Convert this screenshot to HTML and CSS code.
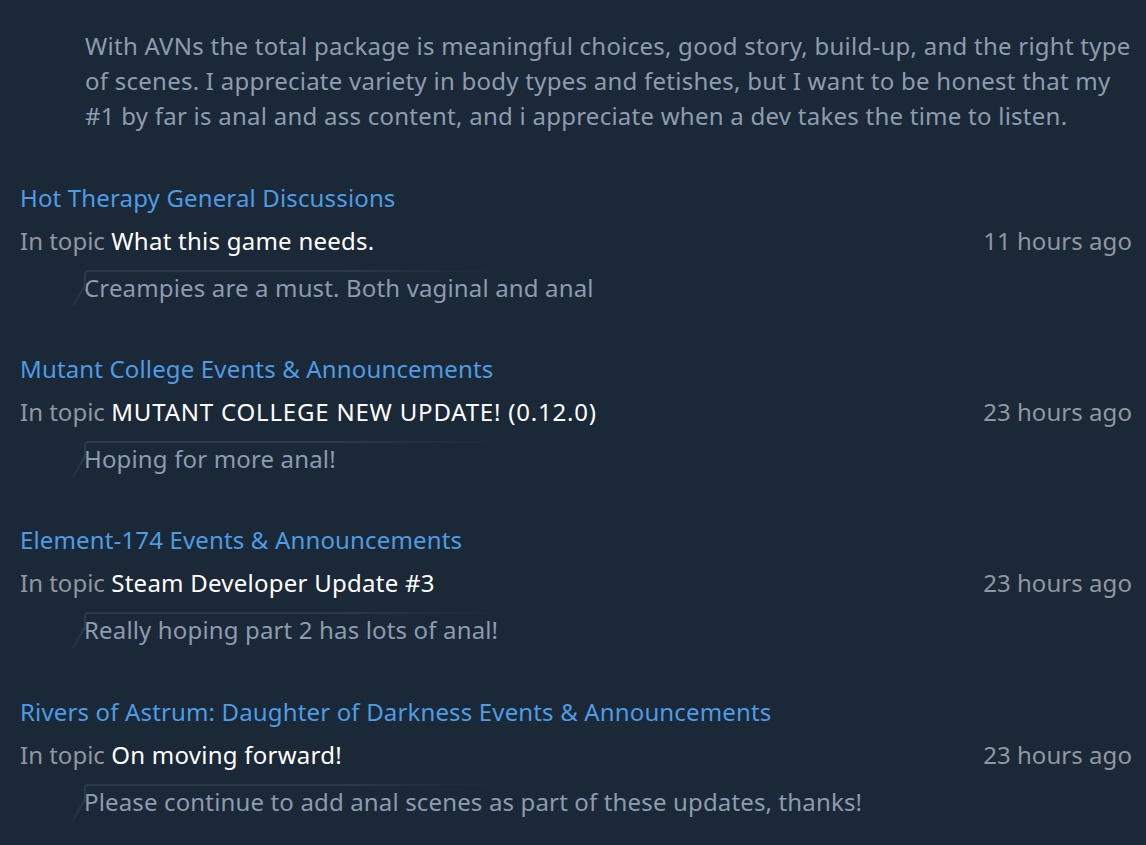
FILE: index.html
```html
<!DOCTYPE html>
<html lang="en">
<head>
<meta charset="utf-8">
<title>Comment history</title>
<link rel="stylesheet" href="styles.css">
</head>
<body>
<div class="page">
  <div class="intro">With AVNs the total package is meaningful choices, good story, build-up, and the right type of scenes. I appreciate variety in body types and fetishes, but I want to be honest that my #1 by far is anal and ass content, and i appreciate when a dev takes the time to listen.</div>

  <div class="item">
    <a class="forum" href="#">Hot Therapy General Discussions</a>
    <div class="topic-row">
      <div class="topic"><span class="label">In topic</span> <span class="title">What this game needs.</span></div>
      <div class="time">11 hours ago</div>
    </div>
    <div class="quote">Creampies are a must. Both vaginal and anal</div>
  </div>

  <div class="item">
    <a class="forum" href="#">Mutant College Events &amp; Announcements</a>
    <div class="topic-row">
      <div class="topic"><span class="label">In topic</span> <span class="title caps">MUTANT COLLEGE NEW UPDATE! (0.12.0)</span></div>
      <div class="time">23 hours ago</div>
    </div>
    <div class="quote">Hoping for more anal!</div>
  </div>

  <div class="item">
    <a class="forum" href="#">Element-174 Events &amp; Announcements</a>
    <div class="topic-row">
      <div class="topic"><span class="label">In topic</span> <span class="title">Steam Developer Update #3</span></div>
      <div class="time">23 hours ago</div>
    </div>
    <div class="quote">Really hoping part 2 has lots of anal!</div>
  </div>

  <div class="item">
    <a class="forum" href="#">Rivers of Astrum: Daughter of Darkness Events &amp; Announcements</a>
    <div class="topic-row">
      <div class="topic"><span class="label">In topic</span> <span class="title">On moving forward!</span></div>
      <div class="time">23 hours ago</div>
    </div>
    <div class="quote">Please continue to add anal scenes as part of these updates, thanks!</div>
  </div>
</div>
</body>
</html>
```

FILE: styles.css
```css
html, body {
  margin: 0;
  padding: 0;
  background: #1b2838;
}

body {
  font-family: "Noto Sans", "Open Sans", "Liberation Sans", sans-serif;
  font-size: 24px;
  letter-spacing: 0.15px;
  overflow: hidden;
}

.page {
  padding: 28px 14px 0 20px;
}

.intro {
  padding-left: 65px;
  margin-right: -6px;
  color: #8d9dae;
  line-height: 35px;
  letter-spacing: 0.25px;
  margin-bottom: 47px;
}

.item {
  display: flex;
  flex-direction: column;
  margin-bottom: 46.2px;
}

.forum {
  color: #4e9ce3;
  text-decoration: none;
  line-height: 36px;
  align-self: flex-start;
}

.topic-row {
  display: flex;
  justify-content: space-between;
  align-items: baseline;
  margin-top: 7px;
  line-height: 36px;
}

.label {
  color: #8f98a0;
  letter-spacing: 0;
}

.title {
  color: #ffffff;
  letter-spacing: 0.25px;
}

.title.caps {
  letter-spacing: 0.8px;
}

.time {
  color: #8f98a0;
  letter-spacing: 0.05px;
}

.quote {
  position: relative;
  margin-top: 11px;
  margin-left: 64px;
  line-height: 35px;
  color: #8c9cae;
}

.quote::before {
  content: "";
  position: absolute;
  left: 0;
  top: 0;
  width: 420px;
  height: 16px;
  border-top: 2px solid #2d3947;
  border-left: 2px solid #2d3947;
  border-top-left-radius: 4px;
  -webkit-mask-image: linear-gradient(to right, #000 60%, transparent 100%);
  mask-image: linear-gradient(to right, #000 60%, transparent 100%);
}

.quote::after {
  content: "";
  position: absolute;
  left: 0;
  top: 15px;
  width: 2px;
  height: 24px;
  background: linear-gradient(to bottom, #2d3947, #243040);
  transform-origin: top left;
  transform: rotate(30deg);
}
```
